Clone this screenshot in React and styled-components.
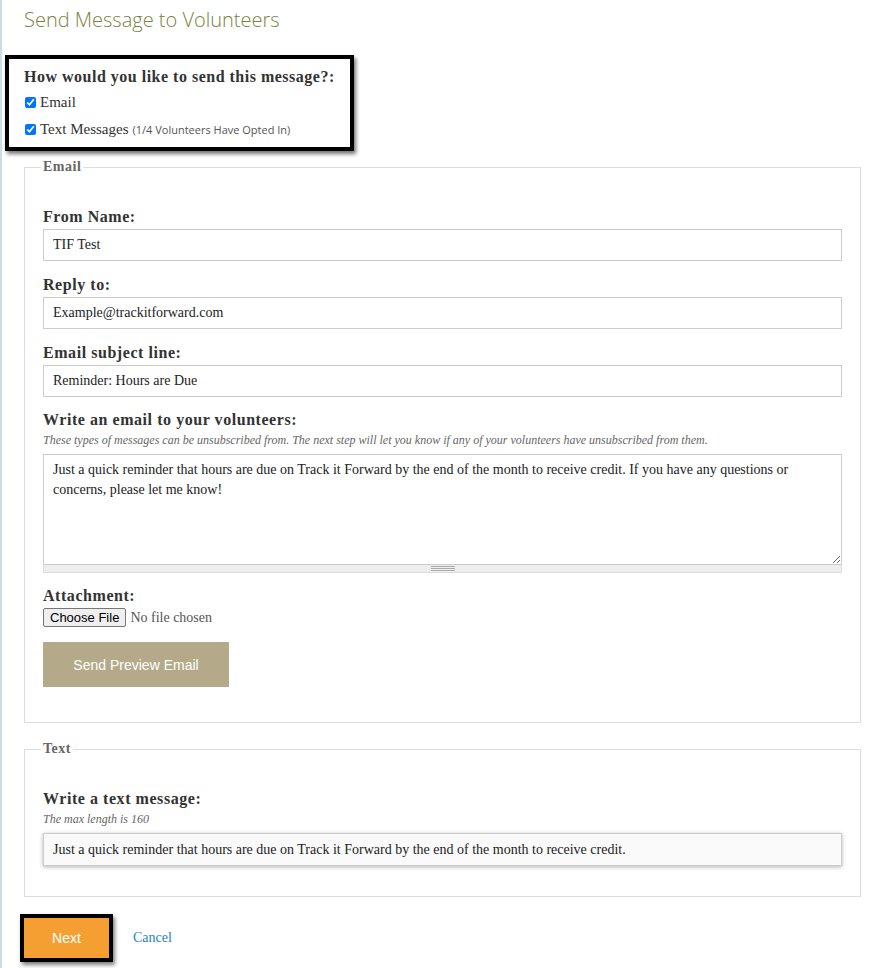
import React from "react";
import styled, { createGlobalStyle } from "styled-components";

const GlobalStyle = createGlobalStyle`
  html, body {
    margin: 0;
    padding: 0;
    background: #fff;
  }
  body {
    font-family: "Liberation Serif", Georgia, serif;
    color: #333;
  }
`;

const Page = styled.div`
  width: 881px;
  min-height: 968px;
  box-sizing: border-box;
  border-left: 2px solid #c9dde5;
  padding: 6px 20px 0 22px;
`;

const Title = styled.h1`
  margin: 0;
  font-family: "Open Sans", sans-serif;
  font-weight: 300;
  font-size: 20px;
  line-height: 28px;
  color: #7a8340;
`;

const Highlight = styled.div`
  width: fit-content;
  margin: 21px 0 7px -19px;
  padding: 8px 15px 4px 15px;
  border: 4px solid #000;
  box-shadow: 2px 3px 4px rgba(0, 0, 0, 0.55);
`;

const Question = styled.div`
  font-weight: bold;
  font-size: 16px;
  letter-spacing: 0.5px;
  line-height: 20px;
  color: #333;
  margin-bottom: 2px;
`;

const CheckRow = styled.label`
  display: flex;
  align-items: center;
  height: 27px;
  font-size: 15px;
  color: #333;

  input {
    margin: 0 4px 0 1px;
    width: 11px;
    height: 11px;
  }
`;

const Aside = styled.span`
  font-family: "Open Sans", sans-serif;
  font-size: 11px;
  color: #555;
  margin-left: 4px;
`;

const Fieldset = styled.fieldset`
  margin: 0 0 ${(p) => p.$gap || 0}px 0;
  padding: 30px 18px ${(p) => p.$bottom}px 18px;
  border: 1px solid #ddd;
  min-width: 0;
`;

const Legend = styled.legend`
  margin-left: -2px;
  padding: 0 2px;
  font-weight: bold;
  font-size: 14px;
  letter-spacing: 0.5px;
  line-height: 18px;
  color: #666;
`;

const Field = styled.div`
  margin-bottom: ${(p) => (p.$gap !== undefined ? p.$gap : 13)}px;
`;

const Label = styled.label`
  display: block;
  font-weight: bold;
  font-size: 16px;
  letter-spacing: 0.55px;
  line-height: 22px;
  color: #333;
  margin-bottom: 1px;
`;

const Note = styled.div`
  font-style: italic;
  font-size: 12px;
  line-height: 16px;
  color: #666;
  margin-bottom: 6px;
`;

const TextInput = styled.input`
  display: block;
  width: 100%;
  box-sizing: border-box;
  height: ${(p) => (p.$shadow ? 33 : 32)}px;
  padding: 0 9px;
  border: 1px solid #ccc;
  background: ${(p) => (p.$shadow ? "#fafafa" : "#fff")};
  box-shadow: ${(p) => (p.$shadow ? "0 1px 4px rgba(0,0,0,0.3)" : "none")};
  font-family: "Liberation Serif", Georgia, serif;
  font-size: 14px;
  color: #222;
  outline: none;
`;

const TextArea = styled.textarea`
  display: block;
  width: 100%;
  box-sizing: border-box;
  height: 110px;
  padding: 5px 9px;
  border: 1px solid #ccc;
  border-bottom: 0;
  font-family: "Liberation Serif", Georgia, serif;
  font-size: 14px;
  line-height: 20px;
  color: #222;
  resize: vertical;
  outline: none;
`;

const Grippie = styled.div`
  height: 7px;
  background: #eee;
  border: 1px solid #ddd;
  border-top-color: #ccc;
  display: flex;
  justify-content: center;
  align-items: center;

  &::after {
    content: "";
    width: 24px;
    height: 5px;
    background: repeating-linear-gradient(
      to bottom,
      #aaa 0,
      #aaa 1px,
      transparent 1px,
      transparent 2px
    );
  }
`;

const FileInput = styled.input`
  display: block;
  font-family: "Liberation Serif", Georgia, serif;
  font-size: 14px;
  color: #555;
  height: 19px;

  &::file-selector-button {
    font-family: "Liberation Sans", Arial, sans-serif;
    font-size: 13px;
    color: #000;
    background: #efefef;
    border: 1px solid #767676;
    border-radius: 2px;
    padding: 1px 6px;
    margin-right: 4px;
    height: 19px;
  }
`;

const PreviewButton = styled.button`
  display: block;
  width: 186px;
  height: 45px;
  margin-top: 15px;
  border: 0;
  background: #b4aa89;
  color: #fff;
  font-family: "Liberation Sans", Arial, sans-serif;
  font-size: 14px;
`;

const Actions = styled.div`
  display: flex;
  align-items: center;
  gap: 20px;
  margin-left: -4px;
`;

const NextButton = styled.button`
  width: 93px;
  height: 48px;
  box-sizing: border-box;
  border: 4px solid #000;
  background: #f59f33;
  color: #fff;
  font-family: "Liberation Sans", Arial, sans-serif;
  font-size: 14px;
  box-shadow: 2px 3px 4px rgba(0, 0, 0, 0.5);
`;

const CancelLink = styled.a`
  font-size: 14px;
  color: #2a83bd;
  text-decoration: none;
`;

export default function App() {
  return (
    <>
      <GlobalStyle />
      <Page>
        <Title>Send Message to Volunteers</Title>

        <Highlight>
          <Question>How would you like to send this message?:</Question>
          <CheckRow>
            <input type="checkbox" defaultChecked />
            Email
          </CheckRow>
          <CheckRow>
            <input type="checkbox" defaultChecked />
            Text Messages<Aside>(1/4 Volunteers Have Opted In)</Aside>
          </CheckRow>
        </Highlight>

        <Fieldset $bottom={35} $gap={17}>
          <Legend>Email</Legend>
          <Field>
            <Label>From Name:</Label>
            <TextInput defaultValue="TIF Test" />
          </Field>
          <Field>
            <Label>Reply to:</Label>
            <TextInput defaultValue="Example@trackitforward.com" />
          </Field>
          <Field $gap={12}>
            <Label>Email subject line:</Label>
            <TextInput defaultValue="Reminder: Hours are Due" />
          </Field>
          <Field $gap={12}>
            <Label>Write an email to your volunteers:</Label>
            <Note>
              These types of messages can be unsubscribed from. The next step
              will let you know if any of your volunteers have unsubscribed
              from them.
            </Note>
            <TextArea defaultValue="Just a quick reminder that hours are due on Track it Forward by the end of the month to receive credit. If you have any questions or concerns, please let me know!" />
            <Grippie />
          </Field>
          <Field $gap={0}>
            <Label>Attachment:</Label>
            <FileInput type="file" />
            <PreviewButton>Send Preview Email</PreviewButton>
          </Field>
        </Fieldset>

        <Fieldset $bottom={30} $gap={17}>
          <Legend>Text</Legend>
          <Field $gap={0}>
            <Label>Write a text message:</Label>
            <Note>The max length is 160</Note>
            <TextInput
              $shadow
              defaultValue="Just a quick reminder that hours are due on Track it Forward by the end of the month to receive credit."
            />
          </Field>
        </Fieldset>

        <Actions>
          <NextButton>Next</NextButton>
          <CancelLink href="#">Cancel</CancelLink>
        </Actions>
      </Page>
    </>
  );
}
